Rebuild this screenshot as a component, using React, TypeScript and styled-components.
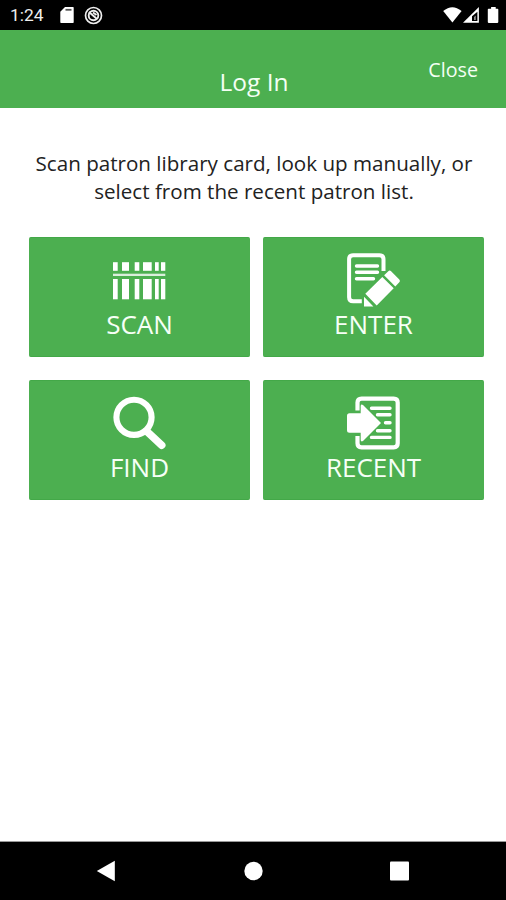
import React from "react";
import styled, { createGlobalStyle } from "styled-components";

const GlobalStyle = createGlobalStyle`
  * { box-sizing: border-box; }
  body { margin: 0; background: #fff; }
`;

const Screen = styled.div`
  width: 506px;
  height: 900px;
  display: flex;
  flex-direction: column;
  overflow: hidden;
  background: #fff;
  font-family: "Open Sans", "Noto Sans", sans-serif;
`;

const StatusBar = styled.div`
  height: 30px;
  flex: none;
  display: flex;
  align-items: center;
  justify-content: space-between;
  padding: 0 7px 0 10px;
  background: #000;
`;

const StatusGroup = styled.div`
  display: flex;
  align-items: center;
  gap: 10px;
`;

const Clock = styled.span`
  width: 40px;
  color: #eee;
  font: 400 17.4px/30px Roboto, sans-serif;
`;

const Header = styled.header`
  height: 78px;
  flex: none;
  display: grid;
  grid-template-columns: 1fr auto 1fr;
  align-items: start;
  background: #4caf50;
  color: #f4fff4;
`;

const Title = styled.h1`
  grid-column: 2;
  margin: 35px 0 0;
  padding-left: 2px;
  font-size: 24.5px;
  line-height: 33px;
  font-weight: 400;
`;

const CloseButton = styled.button`
  justify-self: end;
  margin: 26px 28px 0 0;
  padding: 0;
  border: 0;
  background: none;
  color: inherit;
  font: inherit;
  font-size: 19.7px;
  line-height: 28px;
`;

const Content = styled.main`
  flex: 1;
  padding: 41px 22px 0 29px;
  border-bottom: 1px solid #999;
`;

const Instructions = styled.p`
  margin: 0 3px 0 -2px;
  height: 88px;
  color: #222;
  font-size: 20.6px;
  line-height: 28px;
  text-align: center;
  white-space: nowrap;
`;

const ActionGrid = styled.div`
  display: grid;
  grid-template-columns: 221px 221px;
  grid-auto-rows: 120px;
  gap: 23px 13px;
`;

const ActionButton = styled.button`
  display: flex;
  flex-direction: column;
  align-items: center;
  padding: 13px 0 0;
  border: 1px solid #43a848;
  border-width: 1px 0;
  border-radius: 2px;
  background: #4caf50;
  color: #f6fff6;
  font: inherit;
  font-size: 26px;
  line-height: 28px;
`;

const ActionIcon = styled.svg`
  width: 60px;
  height: 60px;
  flex: none;
  fill: #fff;
  margin-top: -1px;
`;

const NavBar = styled.nav`
  height: 58px;
  flex: none;
  display: flex;
  align-items: center;
  justify-content: space-between;
  padding: 0 96px;
  background: #000;
`;

const BARS = [
  [3.5, 4.7],
  [12.5, 7],
  [25.2, 4.6],
  [33.5, 8.7],
  [45.5, 3.7],
  [51.5, 4.3],
];

const ScanIcon = () => (
  <ActionIcon viewBox="0.5 0 60 60">
    {BARS.map(([x, w]) => (
      <React.Fragment key={x}>
        <rect x={x} y="12.2" width={w} height="8.6" />
        <rect x={x} y="29" width={w} height="20.3" />
      </React.Fragment>
    ))}
    <rect x="3.5" y="23.7" width="52.3" height="2.3" opacity="0.8" />
  </ActionIcon>
);

const EnterIcon = () => (
  <ActionIcon viewBox="0.5 0 60 60">
    <path
      d="M40 21V9.3q0-4-4-4H9.6q-4 0-4 4v37.9q0 4 4 4h8.7"
      fill="none"
      stroke="#fff"
      strokeWidth="4"
    />
    <path
      d="M13 16h21M13 22.3h21M13 28.7h17"
      fill="none"
      stroke="#fff"
      strokeWidth="3.4"
      strokeLinecap="round"
    />
    <path d="M44.8 21.2q1.4-1.2 2.8 0l8.2 8.2q1.4 1.4 0 2.8l-4 4.2L40.6 25.3zM38.8 26.9l11.4 11.4L33.2 55.4 21.8 43.8zM20.5 46.8l9.4 9.6h-9.4z" />
  </ActionIcon>
);

const FindIcon = () => (
  <ActionIcon viewBox="0.5 0 60 60">
    <circle cx="24.5" cy="24.3" r="17.6" fill="none" stroke="#fff" strokeWidth="6.1" />
    <path d="M37.2 38.2 52.2 52.2" stroke="#fff" strokeWidth="7.6" strokeLinecap="round" />
  </ActionIcon>
);

const RecentIcon = () => (
  <ActionIcon viewBox="0.5 0 60 60">
    <path
      d="M14 17.5V9.6q0-4 4-4h32.2q4 0 4 4v40.7q0 4-4 4H18q-4 0-4-4V43"
      fill="none"
      stroke="#fff"
      strokeWidth="4.2"
    />
    <path
      d="M28 15.2h18.5M34 21.8h12.5M42 29.8h4.5M34 37.7h12.5M28 44.4h18.5"
      fill="none"
      stroke="#fff"
      strokeWidth="3.4"
      strokeLinecap="round"
    />
    <path d="M6 20.3h11.2v-7.5q.5-2 2.3-.7l18 17.9-18 18q-1.8 1.2-2.3-.7v-7.6H6q-2.5 0-2.5-2.5V22.8q0-2.5 2.5-2.5z" />
  </ActionIcon>
);

const ACTIONS = [
  { label: "SCAN", Icon: ScanIcon },
  { label: "ENTER", Icon: EnterIcon },
  { label: "FIND", Icon: FindIcon },
  { label: "RECENT", Icon: RecentIcon },
];

export default function App() {
  return (
    <Screen>
      <GlobalStyle />
      <StatusBar>
        <StatusGroup>
          <Clock>1:24</Clock>
          <svg width="14" height="18" viewBox="0 0 14 18">
            <path d="M5 1h8q.7 0 .7.7v14.6q0 .7-.7.7H1q-.7 0-.7-.7V5.8z" fill="#fff" />
            <path d="M5.5 3.8h6" stroke="#555" strokeWidth="1.8" />
          </svg>
          <svg width="19" height="19" viewBox="0 0 19 19" fill="none" stroke="#eee">
            <circle cx="9.5" cy="9.5" r="8" strokeWidth="1.7" />
            <circle cx="9.5" cy="9.5" r="4.8" strokeWidth="1.9" />
            <path d="m5 6 8 7M9 6.5l3.5 2.5" strokeWidth="1.9" />
          </svg>
        </StatusGroup>
        <svg width="56" height="18" viewBox="0 0 56 18" fill="#fff">
          <path d="M.2 5Q9.3-2.7 18.6 5L9.4 16.5z" />
          <path d="M35.9 1v15.8H20z" />
          <path d="M29 15V10.2l5.4-4.4V15z" fill="#000" />
          <path d="M31 14v-3l1.8-1.5V14z" fill="#888" />
          <path d="M45.6 2.7h2.5V1h4.6v1.7h1.8q.8 0 .8.8v12.6q0 .8-.8.8h-8.9q-.8 0-.8-.8V3.5q0-.8.8-.8z" />
        </svg>
      </StatusBar>
      <Header>
        <Title>Log In</Title>
        <CloseButton>Close</CloseButton>
      </Header>
      <Content>
        <Instructions>
          Scan patron library card, look up manually, or
          <br />
          select from the recent patron list.
        </Instructions>
        <ActionGrid>
          {ACTIONS.map(({ label, Icon }) => (
            <ActionButton key={label}>
              <Icon />
              {label}
            </ActionButton>
          ))}
        </ActionGrid>
      </Content>
      <NavBar>
        <svg width="20" height="22" viewBox="0 0 20 22">
          <path d="M.8 11 18.8.8v20.4z" fill="#fff" />
        </svg>
        <svg width="20" height="20" viewBox="0 0 20 20">
          <circle cx="10.5" cy="10" r="9.2" fill="#fff" />
        </svg>
        <svg width="20" height="20" viewBox="0 0 20 20">
          <rect x="0" y=".5" width="19" height="19" rx="1" fill="#fff" />
        </svg>
      </NavBar>
    </Screen>
  );
}
